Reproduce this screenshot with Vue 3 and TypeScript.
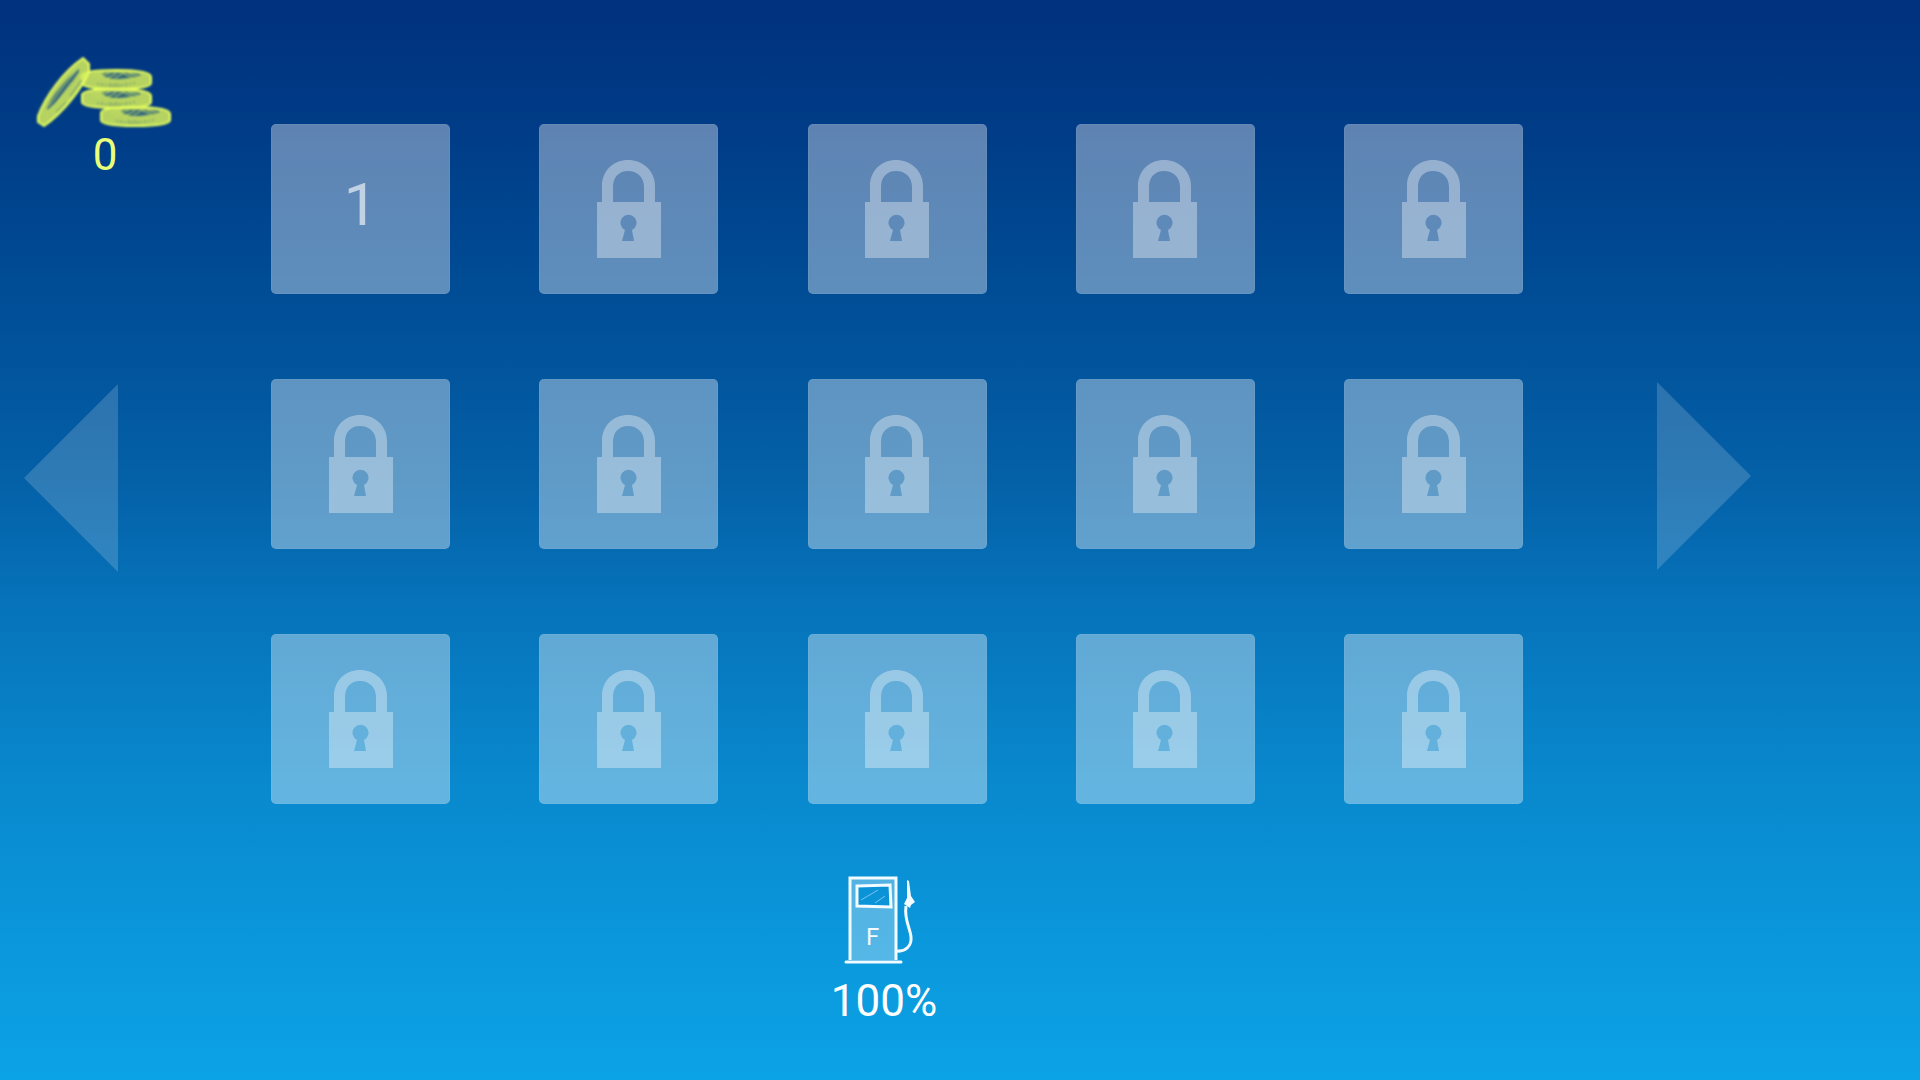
<script setup lang="ts">
interface Level {
  id: number
  unlocked: boolean
}

const coins: number = 0
const fuel: number = 100
const levels: Level[] = Array.from({ length: 15 }, (_, i) => ({
  id: i + 1,
  unlocked: i === 0,
}))
</script>

<template>
  <main class="stage">
    <aside class="side">
      <div class="coins">
        <svg class="coins-icon" viewBox="0 0 144 80" width="144" height="80" aria-hidden="true">
          <defs>
            <g id="coin">
              <path class="coin-body" d="M2 7C2 3 14 1 36 1S71 3 71 8V14C71 18 58 20 36 20S2 18 2 14Z" />
              <path class="coin-face" d="M22 5C26 3 32 4 38 4S58 4 61 6C56 9 46 9 40 10C32 10 24 9 22 5Z" />
              <path class="coin-scratch" d="M12 7L24 3M17 9L30 4M25 10L36 5M48 4L60 8M42 4L54 9M35 9L42 5" />
              <path class="coin-notch" d="M18 14v2M22 14v3M26 15v2M30 14v4M33 15v3M36 14v4M39 15v3M42 15v2M46 14v3M50 14v2M54 13v2" />
            </g>
          </defs>
          <use href="#coin" x="48" y="17" />
          <use href="#coin" x="48" y="36" />
          <use href="#coin" x="67" y="54" />
          <path class="coin-body" d="M51 6L57 12L57 20C50 36 32 60 12 74L6 70L6 64C14 43 32 19 51 6Z" />
          <path class="coin-face" d="M47 17C49 22 28 49 15 58C15 50 36 24 47 17Z" />
          <path class="coin-notch" d="M50 28L38 44M34 50L24 60" />
          <path class="coin-scratch" d="M17 54L30 36M20 56L40 30M30 36L45 18M26 50L46 22" />
        </svg>
        <output class="amount coins-amount" aria-label="Coins">{{ coins }}</output>
      </div>
      <button class="arrow prev" type="button" aria-label="Previous page">
        <svg viewBox="0 0 94 188" width="94" height="188"><path d="M94 0V188L0 94Z" /></svg>
      </button>
    </aside>

    <section class="center">
      <div class="levels">
        <button
          v-for="level in levels"
          :key="level.id"
          class="level"
          type="button"
          :disabled="!level.unlocked"
          :aria-label="`Level ${level.id}`"
        >
          <span v-if="level.unlocked" class="number">{{ level.id }}</span>
          <svg v-else class="lock" viewBox="0 0 64 98" width="64" height="98">
            <path
              fill-rule="evenodd"
              d="M0 42H5V26C5 10 17 0 31 0S58 10 58 26V42H64V98H0ZM16 42H47V27C47 17 40 11 31 11S16 17 16 27ZM28 70L25 81H37L35 70A8 8 0 1 0 28 70Z"
            />
          </svg>
        </button>
      </div>

      <div class="fuel">
        <svg class="pump" viewBox="0 0 72 88" width="72" height="88" aria-hidden="true">
          <path class="pump-body" d="M7 2H52V84H7ZM13 10V31H47V10Z" fill-rule="evenodd" />
          <path class="pump-line" d="M6 84V2H52V84M5 2H53" />
          <path class="pump-line" d="M13 10L46 9L47 31L13 30Z" />
          <path class="pump-glare" d="M17 24L34 14M31 27L41 20" />
          <text class="pump-letter" x="22" y="69">F</text>
          <path class="pump-base" d="M2 86H57" />
          <path class="pump-line" d="M53 75C61 76 68 70 67 61C66 51 60 44 62 30" />
          <path class="pump-nozzle" d="M63 4L65 5L67 20L71 26L67 29L66 32L60 28L63 22Z" />
        </svg>
        <output class="amount" aria-label="Fuel">{{ fuel }}%</output>
      </div>
    </section>

    <aside class="side">
      <button class="arrow next" type="button" aria-label="Next page">
        <svg viewBox="0 0 94 188" width="94" height="188"><path d="M0 0V188L94 94Z" /></svg>
      </button>
    </aside>
  </main>
</template>

<style>
body {
  margin: 0;
}
</style>

<style scoped>
.stage {
  display: grid;
  grid-template-columns: 271fr 1252fr 397fr;
  min-height: 100vh;
  box-sizing: border-box;
  font-family: Roboto, "Liberation Sans", sans-serif;
  background: linear-gradient(
    #00317e 0%,
    #003b86 11%,
    #004e97 28%,
    #0460a7 44%,
    #0673ba 56%,
    #0988cd 72%,
    #0b98dc 88%,
    #0ca2e6 100%
  );
}

.side {
  display: grid;
  grid-template-rows: 382px auto;
  align-content: start;
}

.coins {
  display: flex;
  flex-direction: column;
  align-items: center;
  width: 146px;
  padding: 52px 0 0 32px;
}

.coins-icon {
  display: block;
  align-self: flex-start;
  filter: blur(1px);
}

.amount {
  font-size: 44px;
  line-height: 48px;
  color: #fff;
}

.coins-amount {
  line-height: 46px;
  color: #e9ff7a;
}

.coin-body {
  fill: #d6ee5c;
  fill-opacity: 0.85;
  stroke: #e8ff5e;
  stroke-width: 2;
  stroke-linejoin: round;
}

.coin-face {
  fill: #1d5384;
  fill-opacity: 0.85;
}

.coin-scratch {
  fill: none;
  stroke: #c6e060;
  stroke-width: 1;
}

.coin-notch {
  stroke: #5f8a6c;
  stroke-width: 1;
}

.arrow,
.level {
  border: 0;
  padding: 0;
  background: none;
  font: inherit;
}

.arrow {
  grid-row: 2;
  width: 94px;
}

.arrow svg {
  display: block;
  fill: rgb(255 255 255 / 17%);
}

.prev {
  margin: 2px 0 0 24px;
}

.next {
  margin-left: 134px;
}

.center {
  padding-top: 124px;
}

.levels {
  display: grid;
  grid-template-columns: repeat(5, 179px);
  justify-content: space-between;
  row-gap: 85px;
}

.level {
  display: flex;
  align-items: center;
  justify-content: center;
  height: 170px;
  border: 1px solid rgb(255 255 255 / 5%);
  border-radius: 5px;
  background: rgb(255 255 255 / 37%);
}

.number {
  padding-bottom: 8px;
  font-size: 60px;
  line-height: 64px;
  color: rgb(255 255 255 / 62%);
}

.lock {
  fill: rgb(255 255 255 / 35%);
}

.fuel {
  display: flex;
  flex-direction: column;
  align-items: center;
  gap: 13px;
  padding: 72px 26px 0 0;
}

.pump {
  display: block;
  margin-right: 8px;
}

.pump-body {
  fill: rgb(255 255 255 / 30%);
}

.pump-line,
.pump-base,
.pump-glare {
  fill: none;
  stroke: #f2fbff;
  stroke-width: 3;
}

.pump-base {
  stroke-linecap: round;
}

.pump-glare {
  stroke: #7cc4ee;
  stroke-width: 1;
}

.pump-letter {
  fill: #f2fbff;
  font-size: 24px;
}

.pump-nozzle {
  fill: #f2fbff;
}
</style>
